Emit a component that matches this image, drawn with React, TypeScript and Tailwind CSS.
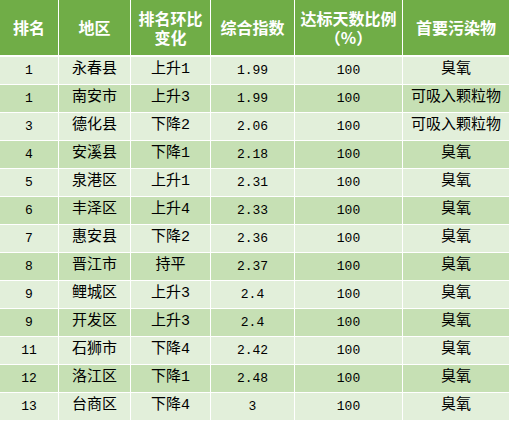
import React from "react";

const rows = [
  ["1", "永春县", "上升1", "1.99", "100", "臭氧"],
  ["1", "南安市", "上升3", "1.99", "100", "可吸入颗粒物"],
  ["3", "德化县", "下降2", "2.06", "100", "可吸入颗粒物"],
  ["4", "安溪县", "下降1", "2.18", "100", "臭氧"],
  ["5", "泉港区", "上升1", "2.31", "100", "臭氧"],
  ["6", "丰泽区", "上升4", "2.33", "100", "臭氧"],
  ["7", "惠安县", "下降2", "2.36", "100", "臭氧"],
  ["8", "晋江市", "持平", "2.37", "100", "臭氧"],
  ["9", "鲤城区", "上升3", "2.4", "100", "臭氧"],
  ["9", "开发区", "上升3", "2.4", "100", "臭氧"],
  ["11", "石狮市", "下降4", "2.42", "100", "臭氧"],
  ["12", "洛江区", "下降1", "2.48", "100", "臭氧"],
  ["13", "台商区", "下降4", "3", "100", "臭氧"],
];

const body = "font-['Liberation_Mono','Noto_Sans_CJK_SC',monospace]";

const App = () => {
  return (
    <div className="w-[509px] h-[421px] bg-white">
      <div className="grid grid-cols-[58px_71px_79px_83px_107px_106px] gap-px bg-white">
        {/* header */}
        {[
          ["排名"],
          ["地区"],
          ["排名环比", "变化"],
          ["综合指数"],
          ["达标天数比例", "（%）"],
          ["首要污染物"],
        ].map((h, i) => (
          <div
            key={i}
            className="h-[55px] bg-[#70ad47] text-white font-bold text-[16px] leading-[19px] flex flex-col items-center justify-center font-['Noto_Sans_CJK_SC',sans-serif] mb-px"
          >
            {h.map((l, j) => (
              <span key={j}>{l}</span>
            ))}
          </div>
        ))}

        {/* body rows */}
        {rows.map((r, ri) =>
          r.map((c, ci) => (
            <div
              key={ri + "-" + ci}
              className={`h-[27px] flex items-center justify-center text-black ${body} ${
                ri % 2 === 0 ? "bg-[#e2efda]" : "bg-[#c6e0b4]"
              } ${ci === 0 || ci === 3 || ci === 4 ? "text-[13px]" : "text-[15px]"}`}
            >
              {c}
            </div>
          ))
        )}
      </div>
    </div>
  );
};

export default App;
